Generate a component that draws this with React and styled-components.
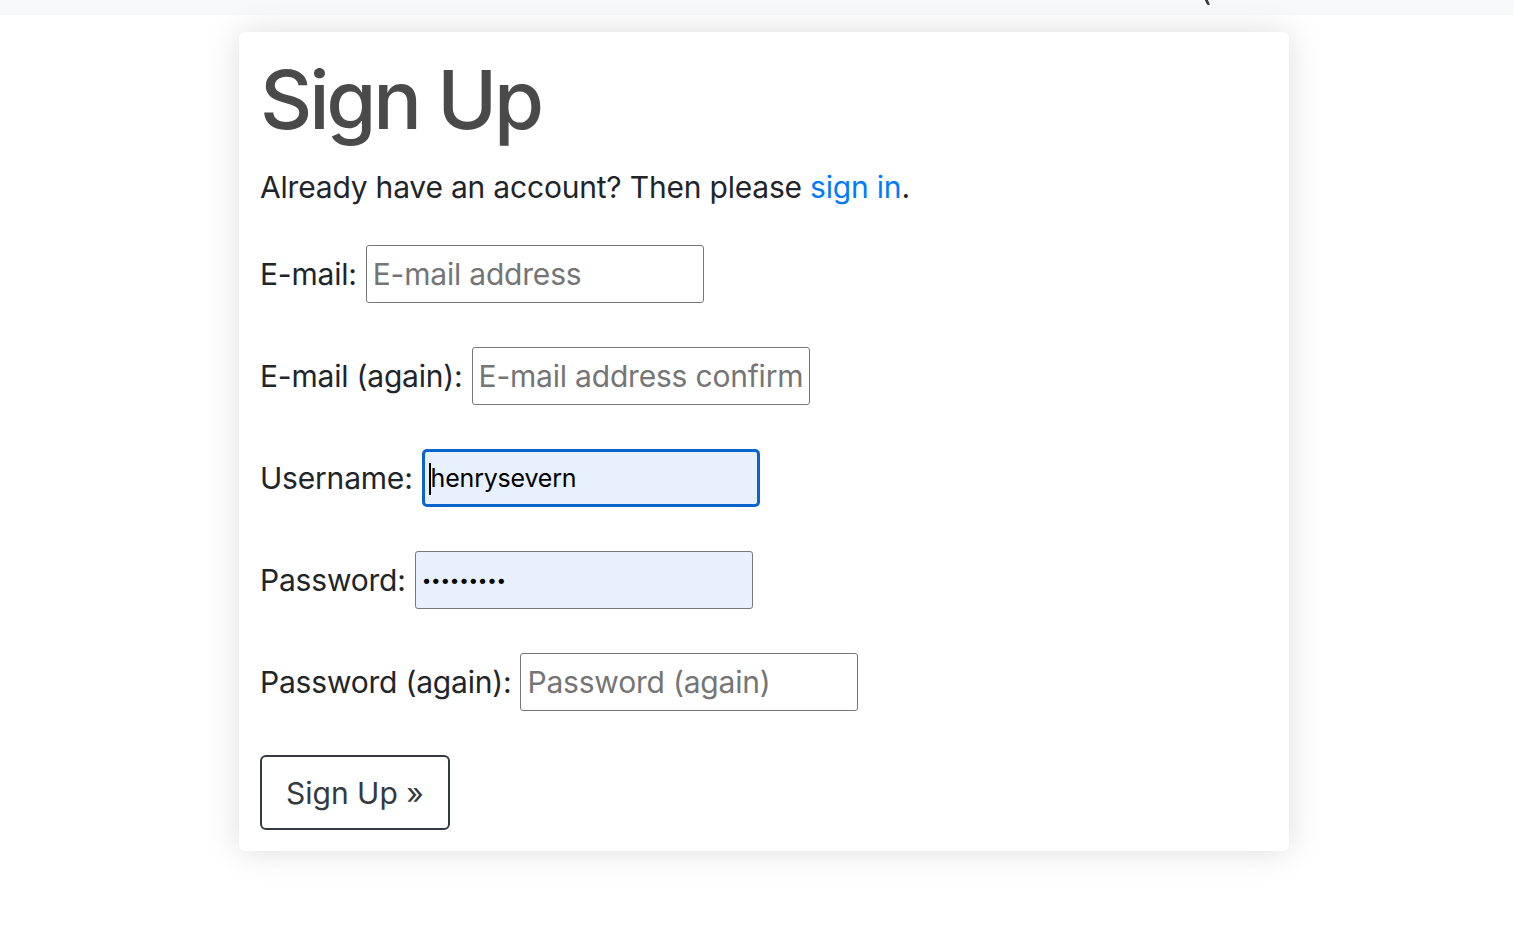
import styled, { createGlobalStyle } from "styled-components";

const GlobalStyle = createGlobalStyle`
  html, body {
    margin: 0;
    padding: 0;
    background: #fff;
    font-family: Inter, "Liberation Sans", sans-serif;
    color: #212529;
  }
`;

export default function App() {
  return (
    <>
      <GlobalStyle />
      <Navbar>
        <NavTail />
      </Navbar>
      <Main>
        <Card>
          <Title>Sign Up</Title>
          <Lead>
            Already have an account? Then please <Link href="#">sign in</Link>.
          </Lead>
          <Form onSubmit={(e) => e.preventDefault()}>
            <Row>
              <Label htmlFor="email">E-mail:</Label>
              <Input id="email" type="email" placeholder="E-mail address" />
            </Row>
            <Row>
              <Label htmlFor="email2">E-mail (again):</Label>
              <Input id="email2" type="email" placeholder="E-mail address confirm" />
            </Row>
            <Row>
              <Label htmlFor="username">Username:</Label>
              <InputWrap>
                <Input id="username" type="text" defaultValue="henrysevern" $focused $filled $size="25px" />
                <Caret />
              </InputWrap>
            </Row>
            <Row>
              <Label htmlFor="password">Password:</Label>
              <Input id="password" type="password" defaultValue="secretpw1" $filled $size="17px" />
            </Row>
            <Row>
              <Label htmlFor="password2">Password (again):</Label>
              <Input id="password2" type="password" placeholder="Password (again)" />
            </Row>
            <Button type="submit">Sign Up &raquo;</Button>
          </Form>
        </Card>
      </Main>
    </>
  );
}

const Navbar = styled.div`
  height: 15px;
  background: #f8f9fa;
  overflow: hidden;
  display: flex;
  padding-left: 1206px;
`;

const NavTail = styled.span`
  width: 3px;
  height: 5px;
  background: #343a40;
  border-radius: 0 0 2px 2px;
  transform: skewX(25deg);
`;

const Main = styled.main`
  display: flex;
  padding: 17px 0 60px 239px;
`;

const Card = styled.div`
  width: 1050px;
  box-sizing: border-box;
  padding: 20px 21px 21px 21px;
  background: #fff;
  border-radius: 6px;
  box-shadow: 0 0 34px rgba(0, 0, 0, 0.14);
`;

const Title = styled.h1`
  margin: 0 0 17px;
  font-size: 81px;
  font-weight: 500;
  line-height: 96px;
  letter-spacing: -3.2px;
  color: #4a4a4a;
`;

const Lead = styled.p`
  margin: 0 0 35px;
  font-size: 30px;
  line-height: 45px;
  letter-spacing: -0.2px;
`;

const Link = styled.a`
  color: #007bff;
  text-decoration: none;
`;

const Form = styled.form`
  display: flex;
  flex-direction: column;
  align-items: flex-start;
  gap: 44px;
`;

const Row = styled.div`
  display: flex;
  align-items: center;
  gap: 9px;
`;

const Label = styled.label`
  font-size: 30px;
  line-height: 45px;
  letter-spacing: -0.2px;
`;

const InputWrap = styled.div`
  position: relative;
  display: flex;
`;

const Caret = styled.span`
  position: absolute;
  left: 7px;
  top: 14px;
  width: 2px;
  height: 32px;
  background: #000;
`;

const Input = styled.input`
  width: 338px;
  height: 58px;
  box-sizing: border-box;
  padding: 0 6px;
  font-family: inherit;
  font-size: ${(p) => p.$size || "30px"};
  letter-spacing: -0.2px;
  color: #000;
  background: ${(p) => (p.$filled ? "#e8f0fe" : "#fff")};
  border: ${(p) => (p.$focused ? "3px solid #0b63ce" : "1px solid #767676")};
  border-radius: ${(p) => (p.$focused ? "5px" : "3px")};
  outline: none;

  &::placeholder {
    color: #757575;
  }
`;

const Button = styled.button`
  height: 75px;
  padding: 0 24px;
  font-family: inherit;
  font-size: 30px;
  color: #343a40;
  background: #fff;
  border: 2px solid #343a40;
  border-radius: 6px;
`;
